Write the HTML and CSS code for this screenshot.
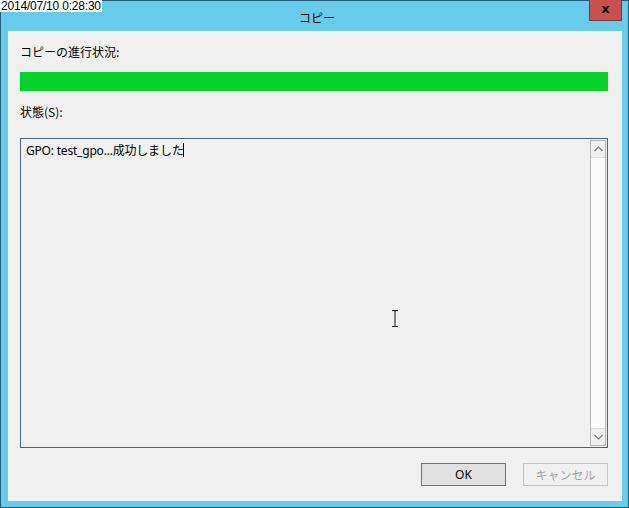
FILE: index.html
```html
<!DOCTYPE html>
<html lang="ja">
<head>
<meta charset="utf-8">
<link rel="stylesheet" href="styles.css">
</head>
<body>
<div class="window">
  <div class="titlebar">
    <span class="stamp">2014/07/10 0:28:30</span>
    <span class="title">コピー</span>
    <span class="close">x</span>
  </div>
  <div class="client">
    <div class="label l1">コピーの進行状況:</div>
    <div class="progress"><div class="fill"></div></div>
    <div class="label l2">状態(S):</div>
    <div class="textbox">
      <div class="content">GPO: test_gpo...成功しました<span class="caret"></span></div>
      <div class="scroll">
        <div class="arrow up"><svg width="9" height="6" viewBox="0 0 9 6"><path d="M0.5 5 L4.5 1 L8.5 5" fill="none" stroke="#7a7a7a" stroke-width="1.2"/></svg></div>
        <div class="track"></div>
        <div class="arrow down"><svg width="9" height="6" viewBox="0 0 9 6"><path d="M0.5 1 L4.5 5 L8.5 1" fill="none" stroke="#7a7a7a" stroke-width="1.2"/></svg></div>
      </div>
      <svg class="ibeam" width="8" height="17" viewBox="0 0 8 17"><path d="M1 0.5 H7 M4 0.5 V16.5 M1 16.5 H7" fill="none" stroke="#111" stroke-width="1"/></svg>
    </div>
    <div class="buttons">
      <div class="btn ok">OK</div>
      <div class="btn cancel">キャンセル</div>
    </div>
  </div>
</div>
</body>
</html>
```
FILE: styles.css
```css
html, body {
  margin: 0;
  padding: 0;
}
body {
  width: 629px;
  height: 508px;
  overflow: hidden;
  font-family: "Noto Sans", "Noto Sans CJK JP", sans-serif;
  font-size: 12px;
  color: #000;
}
.window {
  box-sizing: border-box;
  width: 629px;
  height: 508px;
  background: #69cbea;
  border: 1px solid #1f5b7a;
  padding: 0 6px 6px 7px;
  display: flex;
  flex-direction: column;
}
.titlebar {
  height: 30px;
  flex: none;
  position: relative;
  display: flex;
  align-items: center;
  justify-content: center;
}
.stamp {
  position: absolute;
  left: -8px;
  top: -1px;
  background: #fff;
  color: #000;
  font-family: "Liberation Sans", sans-serif;
  font-size: 12px;
  line-height: 12px;
  padding: 0 1px 0 1px;
  letter-spacing: -0.2px;
}
.title {
  font-family: "Noto Sans CJK JP", sans-serif;
  font-size: 12px;
  color: #000;
  margin-left: 4px;
  margin-top: 2px;
}
.close {
  position: absolute;
  right: 0px;
  top: -1px;
  width: 33px;
  height: 21px;
  box-sizing: border-box;
  background: #c75050;
  border: 1px solid #6e3a3a;
  border-top: none;
  color: #111;
  font-family: "DejaVu Sans", sans-serif;
  font-weight: bold;
  font-size: 13px;
  line-height: 17px;
  text-align: center;
}
.client {
  flex: 1;
  background: #f0f0f0;
  padding: 0 14px 0 12px;
  display: flex;
  flex-direction: column;
}
.label {
  font-family: "Noto Sans CJK JP", sans-serif;
  font-size: 12px;
  line-height: 16px;
  height: 16px;
}
.l1 { margin-top: 13px; }
.progress {
  margin-top: 12px;
  height: 19px;
  background: #e6e6e6;
}
.fill {
  height: 100%;
  width: 100%;
  background: #06d22b;
}
.l2 { margin-top: 13px; }
.textbox {
  margin-top: 18px;
  height: 310px;
  box-sizing: border-box;
  border: 1px solid #4f6375;
  background: #f0f0f0;
  position: relative;
  display: flex;
}
.content {
  flex: 1;
  padding: 4px 0 0 5px;
  font-family: "Noto Sans", "Noto Sans CJK JP", sans-serif;
  font-size: 12px;
  line-height: 16px;
  letter-spacing: -0.2px;
}
.caret {
  display: inline-block;
  width: 1px;
  height: 14px;
  background: #000;
  vertical-align: -2px;
}
.scroll {
  width: 16px;
  margin: 1px 1px 1px 0;
  box-sizing: border-box;
  border: 1px solid #b4b4b4;
  background: #f7f7f7;
  display: flex;
  flex-direction: column;
}
.arrow {
  height: 16px;
  display: flex;
  align-items: center;
  justify-content: center;
  background: #f0f0f0;
}
.up { border-bottom: 1px solid #dcdcdc; }
.down { border-top: 1px solid #dcdcdc; }
.track { flex: 1; background: #fafafa; }
.ibeam {
  position: absolute;
  left: 370px;
  top: 171px;
}
.buttons {
  margin-top: 15px;
  display: flex;
  justify-content: flex-end;
  gap: 17px;
}
.btn {
  width: 85px;
  height: 23px;
  box-sizing: border-box;
  display: flex;
  align-items: center;
  justify-content: center;
  font-family: "Noto Sans", "Noto Sans CJK JP", sans-serif;
  font-size: 12px;
}
.ok {
  background: #e1e1e1;
  border: 1px solid #3c7fb1;
  color: #000;
}
.cancel {
  background: #f0f0f0;
  border: 1px solid #c4c4c4;
  color: #a0a0a0;
  font-family: "Noto Sans CJK JP", sans-serif;
}
```
